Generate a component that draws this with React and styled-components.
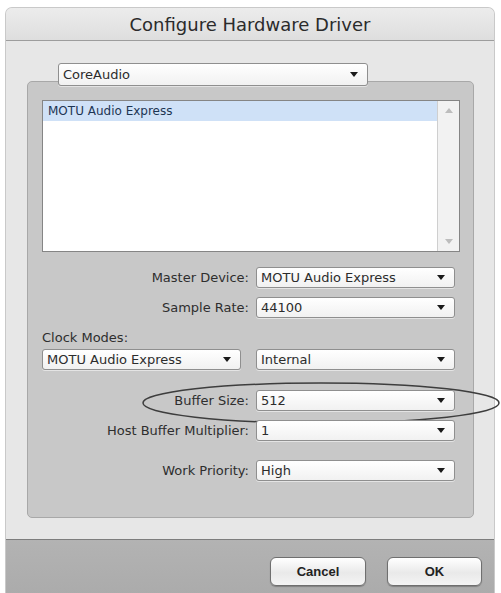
import React from 'react';
import styled, { createGlobalStyle } from 'styled-components';

const GlobalStyle = createGlobalStyle`
  html, body {
    margin: 0;
    padding: 0;
    background: #ffffff;
    overflow: hidden;
  }
  body {
    font-family: "DejaVu Sans", "Liberation Sans", sans-serif;
    font-size: 13px;
    color: #2a2a2a;
  }
`;

const Page = styled.div`
  position: relative;
  width: 501px;
  height: 593px;
  padding: 7px 0 0 5px;
  box-sizing: border-box;
`;

const Window = styled.div`
  width: 488px;
  height: 600px;
  border: 1px solid #c9c9c9;
  border-bottom: none;
  border-radius: 7px 7px 0 0;
  overflow: hidden;
  display: flex;
  flex-direction: column;
  background: #e7e7e7;
`;

const TitleBar = styled.div`
  height: 32px;
  flex: none;
  display: flex;
  align-items: center;
  justify-content: center;
  background: linear-gradient(#ececec, #dedede);
  border-bottom: 1px solid #9d9d9d;
  font-family: "DejaVu Sans", "Liberation Sans", sans-serif;
  font-size: 18px;
  color: #2b2b2b;
`;

const Content = styled.div`
  padding: 22px 20px 21px 21px;
  display: flex;
  flex-direction: column;
`;

const Group = styled.div`
  margin-top: -5px;
  height: 437px;
  box-sizing: border-box;
  background: #c8c8c8;
  border: 1px solid #a8a8a8;
  border-radius: 5px;
  padding: 18px 12px 0 14px;
  display: flex;
  flex-direction: column;
`;

const Select = styled.div`
  position: relative;
  z-index: 1;
  box-sizing: border-box;
  width: ${p => p.$width || 199}px;
  height: ${p => p.$height || 21}px;
  margin-left: ${p => p.$left || 0}px;
  flex: none;
  display: flex;
  align-items: center;
  justify-content: space-between;
  padding: 0 9px 0 4px;
  background: linear-gradient(#ffffff, #f1f1f1);
  border: 1px solid #8f8f8f;
  border-radius: 3px;
  box-shadow: 0 1px 0 rgba(255, 255, 255, 0.5);
  font-size: 13px;
  color: #2c2c2c;
  white-space: nowrap;
`;

const Caret = styled.span`
  width: 0;
  height: 0;
  border-left: 4px solid transparent;
  border-right: 4px solid transparent;
  border-top: 5px solid #1a1a1a;
`;

const ListBox = styled.div`
  height: 152px;
  box-sizing: border-box;
  margin-right: 1px;
  background: #ffffff;
  border: 1px solid #858585;
  display: flex;
  flex: none;
`;

const ListItems = styled.div`
  flex: 1;
`;

const ListItem = styled.div`
  height: 20px;
  display: flex;
  align-items: center;
  padding-left: 5px;
  background: ${p => (p.$selected ? '#cfe1f7' : 'transparent')};
  color: #1d3553;
  font-size: 12px;
`;

const ScrollTrack = styled.div`
  width: 21px;
  background: #f2f2f2;
  border-left: 1px solid #cfcfcf;
  display: flex;
  flex-direction: column;
  justify-content: space-between;
  align-items: center;
  padding: 7px 0;
`;

const Arrow = styled.span`
  width: 0;
  height: 0;
  border-left: 4px solid transparent;
  border-right: 4px solid transparent;
  ${p => (p.$up ? 'border-bottom: 5px solid #bdbdbd;' : 'border-top: 5px solid #bdbdbd;')}
`;

const FieldRow = styled.div`
  display: flex;
  align-items: center;
  margin-top: ${p => p.$gap}px;
  gap: 7px;
`;

const Label = styled.div`
  width: 207px;
  text-align: right;
  font-size: 13px;
  color: #2e2e2e;
  white-space: nowrap;
`;

const SectionLabel = styled.div`
  margin-top: ${p => p.$gap}px;
  font-size: 13px;
  color: #2e2e2e;
  line-height: 14px;
`;

const ClockRow = styled.div`
  display: flex;
  gap: 15px;
  margin-top: 4px;
`;

const BottomBar = styled.div`
  flex: 1;
  border-top: 1px solid #7d7d7d;
  background: linear-gradient(#b3b3b3, #a9a9a9);
  display: flex;
  justify-content: flex-end;
  align-items: flex-start;
  gap: 21px;
  padding: 17px 12px 0 0;
`;

const Button = styled.button`
  width: ${p => p.$width}px;
  height: 29px;
  box-sizing: border-box;
  border: 1px solid #6f6f6f;
  border-radius: 6px;
  background: linear-gradient(#ffffff, #e9e9e9 55%, #f4f4f4);
  box-shadow: 0 1px 1px rgba(0, 0, 0, 0.25);
  font-family: "Liberation Sans", Arial, sans-serif;
  font-weight: bold;
  font-size: 13px;
  color: #222;
`;

const Ellipse = styled.svg`
  position: absolute;
  left: 141px;
  top: 381px;
  width: 360px;
  height: 44px;
  overflow: visible;
`;

const Dropdown = ({ value, width, left, height }) => (
  <Select $width={width} $left={left} $height={height}>
    <span>{value}</span>
    <Caret />
  </Select>
);

const Field = ({ label, value, gap }) => (
  <FieldRow $gap={gap}>
    <Label>{label}</Label>
    <Dropdown value={value} />
  </FieldRow>
);

export default function App() {
  return (
    <>
      <GlobalStyle />
      <Page>
        <Window>
          <TitleBar>Configure Hardware Driver</TitleBar>
          <Content>
            <Dropdown value="CoreAudio" width={310} height={23} left={31} />
            <Group>
              <ListBox>
                <ListItems>
                  <ListItem $selected>MOTU Audio Express</ListItem>
                </ListItems>
                <ScrollTrack>
                  <Arrow $up />
                  <Arrow />
                </ScrollTrack>
              </ListBox>
              <Field label="Master Device:" value="MOTU Audio Express" gap={15} />
              <Field label="Sample Rate:" value="44100" gap={9} />
              <SectionLabel $gap={13}>Clock Modes:</SectionLabel>
              <ClockRow>
                <Dropdown value="MOTU Audio Express" width={199} />
                <Dropdown value="Internal" width={199} />
              </ClockRow>
              <Field label="Buffer Size:" value="512" gap={20} />
              <Field label="Host Buffer Multiplier:" value="1" gap={9} />
              <Field label="Work Priority:" value="High" gap={19} />
            </Group>
          </Content>
          <BottomBar>
            <Button $width={96}>Cancel</Button>
            <Button $width={95}>OK</Button>
          </BottomBar>
        </Window>
        <Ellipse viewBox="0 0 360 44">
          <ellipse cx="180" cy="22" rx="178" ry="20" fill="none" stroke="#3d3d3d" strokeWidth="1.5" />
        </Ellipse>
      </Page>
    </>
  );
}
